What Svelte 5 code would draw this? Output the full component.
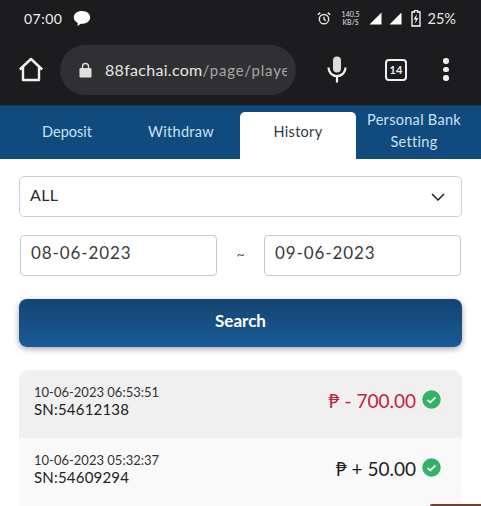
<script lang="ts">
  const tabs = [
    { id: "deposit", label: "Deposit" },
    { id: "withdraw", label: "Withdraw" },
    { id: "history", label: "History" },
    { id: "bank", label: "Personal Bank Setting" },
  ];
  const activeTab = "history";

  const rows = [
    { time: "10-06-2023 06:53:51", sn: "SN:54612138", amount: "₱ - 700.00", out: true },
    { time: "10-06-2023 05:32:37", sn: "SN:54609294", amount: "₱ + 50.00", out: false },
  ];
</script>

<div class="page">
  <header class="chrome">
    <div class="status">
      <span class="clock">07:00</span>
      <svg class="bubble" width="18" height="17" viewBox="0 0 17 16">
        <path d="M8.500 1C4 1 .8 3.500.8 7c0 2.400 1.500 4.300 3.700 5.200L4.200 15l3.300-2.100h1C13 12.900 16.200 10.400 16.200 7S13 1 8.500 1z" fill="#fff" />
      </svg>
      <span class="spacer"></span>
      <svg class="alarm" width="14" height="15" viewBox="0 0 15 15" fill="none" stroke="#e4e4e4" stroke-width="1.500">
        <circle cx="7.500" cy="8.200" r="5" />
        <path d="M7.500 5.500v3l2 1.300M1 3.500 3.500 1.200M14 3.500 11.500 1.200" />
      </svg>
      <span class="speed">140.5<br />KB/S</span>
      <svg width="13" height="13" viewBox="0 0 13 13"><path d="M12.500.5v12H.5z" fill="#fff" /></svg>
      <svg class="signal-last" width="13" height="13" viewBox="0 0 13 13"><path d="M12.500.5v12H.5z" fill="#fff" /></svg>
      <svg width="10" height="17" viewBox="0 0 10 17" fill="none">
        <path d="M3.500.5h3v1.500h2.500v14H1V2h2.500z" stroke="#fff" stroke-width="1.300" />
        <path d="M5.800 4 2.800 9.500h2L4.200 13.500l3-5.500h-2z" fill="#fff" />
      </svg>
      <span class="percent">25%</span>
    </div>

    <div class="toolbar">
      <svg width="26" height="25" viewBox="0 0 26 25" fill="none" stroke="#f2f2f2" stroke-width="2.400" stroke-linejoin="round">
        <path d="M1.800 12.500 13 2l11.200 10.500M5 10v13h16V10" />
      </svg>
      <div class="omnibox">
        <svg width="13" height="16" viewBox="0 0 13 16">
          <path d="M3.500 6V4.500a3 3 0 0 1 6 0V6" fill="none" stroke="#e0e0e0" stroke-width="1.400" />
          <rect x="0.500" y="6" width="12" height="9.500" rx="1.200" fill="#e0e0e0" />
        </svg>
        <div class="url"><span class="host">88fachai.com</span>/page/player</div>
      </div>
      <svg class="mic" width="20" height="27" viewBox="0 0 20 27" fill="none">
        <rect x="6" y="0.500" width="8" height="16" rx="4" fill="#dcdcdc" />
        <path d="M1.500 11.500c0 5 3.500 8.500 8.500 8.500s8.500-3.500 8.500-8.500M10 20v6.500" stroke="#f2f2f2" stroke-width="2.200" />
      </svg>
      <span class="tab-count">14</span>
      <span class="dots"><i></i><i></i><i></i></span>
    </div>
  </header>

  <nav class="tabs" role="tablist">
    {#each tabs as tab (tab.id)}
      <button type="button" role="tab" aria-selected={tab.id === activeTab} class:active={tab.id === activeTab}>
        {tab.label}
      </button>
    {/each}
  </nav>

  <main class="content">
    <div class="select">
      <span>ALL</span>
      <svg width="14" height="8" viewBox="0 0 14 8" fill="none" stroke="#222" stroke-width="1.500">
        <path d="M1 1l6 6 6-6" />
      </svg>
    </div>

    <div class="dates">
      <div class="date">08-06-2023</div>
      <span class="tilde">~</span>
      <div class="date">09-06-2023</div>
    </div>

    <button type="button" class="search">Search</button>

    <ul class="list">
      {#each rows as row (row.sn)}
        <li>
          <div class="info">
            <div class="time">{row.time}</div>
            <div class="sn">{row.sn}</div>
          </div>
          <div class="amount" class:out={row.out}>{row.amount}</div>
          <svg class="ok" width="19" height="19" viewBox="0 0 19 19">
            <circle cx="9.500" cy="9.500" r="9.200" fill="#35b166" />
            <path d="M5.500 9.800l2.800 2.600 5.200-5" fill="none" stroke="#e8f8ee" stroke-width="1.800" />
          </svg>
        </li>
      {/each}
    </ul>
  </main>

  <div class="peek"></div>
</div>

<style>
  :global(body) {
    margin: 0;
    background: #fff;
  }

  .page {
    position: relative;
    width: 481px;
    height: 506px;
    overflow: hidden;
    font-family: Lato, "Noto Sans", sans-serif;
    color: #2a2a2a;
  }

  .chrome {
    height: 105px;
    background: #1c1c1e;
    color: #f0f0f0;
  }

  .status {
    height: 36px;
    display: flex;
    align-items: center;
    gap: 7px;
    padding: 0 25px 0 24px;
  }

  .clock {
    width: 41px;
    font-size: 14px;
    letter-spacing: 0.500px;
  }

  .bubble {
    margin-left: 1px;
  }

  .spacer {
    flex: 1;
  }

  .alarm {
    margin-right: 4px;
  }

  .speed {
    width: 18px;
    font-size: 7px;
    line-height: 8px;
    text-align: center;
    color: #e0e0e0;
    margin-right: 2px;
  }

  .signal-last {
    margin-right: 2px;
  }

  .percent {
    font-size: 14.500px;
    color: #e8e8e8;
  }

  .toolbar {
    height: 69px;
    display: flex;
    align-items: center;
    padding: 0 0 0 18px;
    margin-top: -1px;
  }

  .omnibox {
    width: 236px;
    height: 50px;
    margin-left: 16px;
    box-sizing: border-box;
    padding: 0 9px 0 19px;
    border-radius: 25px;
    background: #303033;
    display: flex;
    align-items: center;
    gap: 13px;
  }

  .url {
    flex: 1;
    overflow: hidden;
    white-space: nowrap;
    font-size: 15px;
    letter-spacing: 0.800px;
    color: #a6a6a6;
  }

  .host {
    font-size: 16px;
    letter-spacing: 0.300px;
    color: #e4e4e4;
  }

  .mic {
    margin-left: 31px;
  }

  .tab-count {
    width: 18px;
    height: 18px;
    margin-left: 38px;
    border: 2.500px solid #f0f0f0;
    border-radius: 4px;
    display: flex;
    align-items: center;
    justify-content: center;
    font-size: 11px;
    font-weight: 700;
  }

  .dots {
    margin-left: 36px;
    display: flex;
    flex-direction: column;
    gap: 3px;
  }

  .dots i {
    width: 5.500px;
    height: 5.500px;
    border-radius: 50%;
    background: #f0f0f0;
  }

  .tabs {
    height: 54px;
    box-sizing: border-box;
    padding: 6px 0 0 12px;
    background: #114a7c;
    border-top: 1px solid #12395c;
    display: flex;
  }

  .tabs button {
    width: 114px;
    padding: 0 8px;
    border: none;
    background: none;
    font-family: inherit;
    font-size: 14.500px;
    line-height: 22px;
    letter-spacing: 0.300px;
    color: #c9e2f7;
    margin-top: -8px;
  }

  .tabs button:nth-child(1) {
    width: 110px;
    letter-spacing: 0;
  }

  .tabs button:nth-child(2) {
    width: 118px;
  }

  .tabs button:nth-child(3) {
    width: 116px;
    margin-top: 0;
    padding-bottom: 8px;
    border-radius: 5px 5px 0 0;
    background: #fff;
    color: #2f3a44;
  }

  .tabs button:nth-child(4) {
    width: 116px;
    flex-shrink: 0;
    padding: 0;
    margin-top: -9px;
  }

  .content {
    padding: 17px 19px 0;
  }

  .select {
    height: 41px;
    box-sizing: border-box;
    padding: 0 16px 4px 10px;
    border: 1px solid #d2d2d2;
    border-radius: 5px;
    display: flex;
    align-items: center;
    justify-content: space-between;
    font-size: 16px;
    letter-spacing: 0.300px;
  }

  .select svg {
    margin-top: 4px;
  }

  .dates {
    margin-top: 18px;
    padding: 0 1px;
    display: flex;
    align-items: center;
    justify-content: space-between;
  }

  .date {
    width: 197px;
    height: 41px;
    box-sizing: border-box;
    padding: 0 10px 6px;
    border: 1px solid #c8c8c8;
    border-radius: 4px;
    display: flex;
    align-items: center;
    font-size: 17px;
    letter-spacing: 0.900px;
    color: #3a3a3a;
  }

  .tilde {
    margin-bottom: 5px;
    font-size: 14px;
    color: #555;
  }

  .search {
    display: block;
    width: 100%;
    height: 48px;
    margin-top: 23px;
    border: none;
    border-radius: 8px;
    background: linear-gradient(#134472, #1a5a96);
    box-shadow: 0 2px 6px rgba(0, 0, 0, 0.35);
    color: #fff;
    font-family: inherit;
    font-size: 17px;
    font-weight: 700;
    padding-bottom: 6px;
  }

  .list {
    list-style: none;
    margin: 23px 0 0;
    padding: 0;
    border-radius: 10px 10px 0 0;
    overflow: hidden;
  }

  .list li {
    height: 68px;
    box-sizing: border-box;
    padding: 15px 21px 0 15px;
    background: #f9f9f9;
    display: flex;
    align-items: flex-start;
    gap: 6px;
  }

  .list li:first-child {
    background: #f0f0f0;
  }

  .info {
    flex: 1;
  }

  .time {
    font-size: 13px;
    line-height: 15px;
    color: #333;
  }

  .sn {
    margin-top: 1px;
    font-size: 15px;
    line-height: 17px;
    letter-spacing: 0.200px;
    color: #222;
  }

  .amount {
    margin-top: 4px;
    font-size: 19px;
    line-height: 24px;
    color: #1f1f1f;
  }

  .amount.out {
    color: #c4213f;
  }

  .ok {
    margin-top: 5px;
  }

  .peek {
    position: absolute;
    right: 0;
    bottom: 0;
    width: 51px;
    height: 2px;
    background: #7a3b34;
    border-radius: 3px 0 0 0;
  }
</style>
